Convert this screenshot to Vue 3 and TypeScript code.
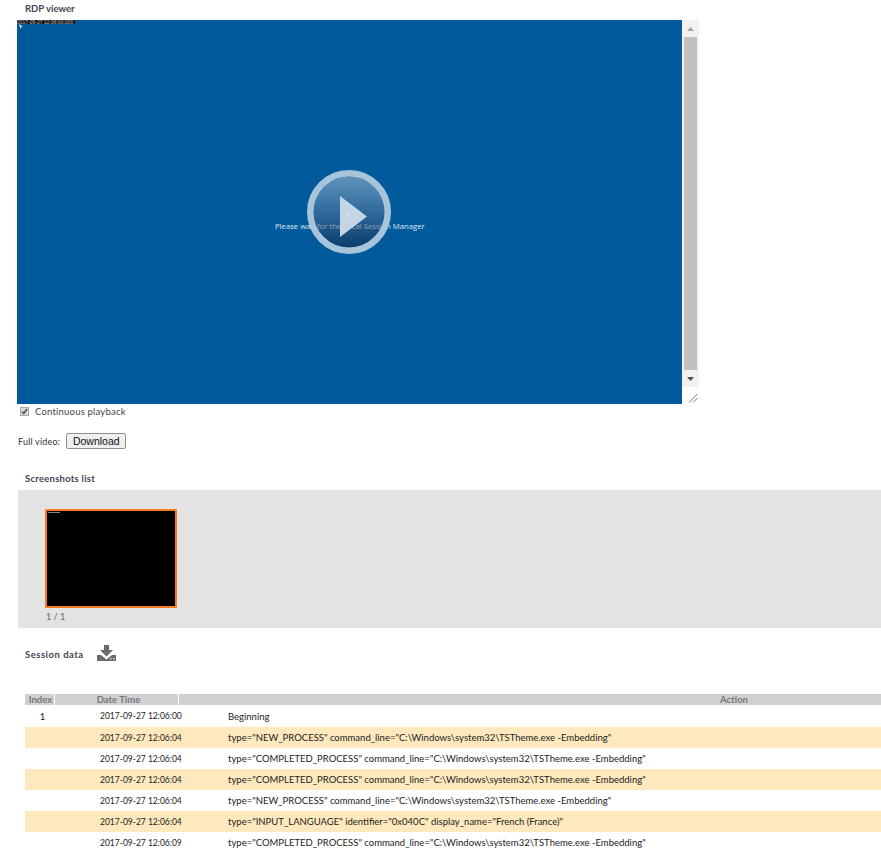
<script setup lang="ts">
interface Row { index: string; date: string; action: string }
const np = 'command_line="C:\\Windows\\system32\\TSTheme.exe -Embedding"'
const rows: Row[] = [
  { index: '1', date: '2017-09-27 12:06:00', action: 'Beginning' },
  { index: '', date: '2017-09-27 12:06:04', action: 'type="NEW_PROCESS" ' + np },
  { index: '', date: '2017-09-27 12:06:04', action: 'type="COMPLETED_PROCESS" ' + np },
  { index: '', date: '2017-09-27 12:06:04', action: 'type="COMPLETED_PROCESS" ' + np },
  { index: '', date: '2017-09-27 12:06:04', action: 'type="NEW_PROCESS" ' + np },
  { index: '', date: '2017-09-27 12:06:04', action: 'type="INPUT_LANGUAGE" identifier="0x040C" display_name="French (France)"' },
  { index: '', date: '2017-09-27 12:06:09', action: 'type="COMPLETED_PROCESS" ' + np },
]
</script>

<template>
  <div class="page">
    <h2 class="title first">RDP viewer</h2>
    <div class="viewer">
      <div class="screen">
        <div class="stamp">2017-09-27 12:06:00.000</div>
        <svg class="cursor" width="4" height="5" viewBox="0 0 4 5"><path d="M0 0 L4 3 H2 L1.500 5 Z" fill="#e8eef4" /></svg>
        <div class="wait">Please wait for the Local Session Manager</div>
        <div class="play">
          <svg width="84" height="84" viewBox="0 0 84 84">
            <defs>
              <linearGradient id="disc" x1="0" y1="0" x2="0" y2="1">
                <stop offset="0" stop-color="#bdccde" />
                <stop offset="0.5" stop-color="#5d7a9c" />
                <stop offset="1" stop-color="#171e38" />
              </linearGradient>
            </defs>
            <circle cx="42" cy="42" r="35.500" fill="url(#disc)" fill-opacity="0.5" />
            <circle cx="42" cy="42" r="38.750" fill="none" stroke="#b5cde0" stroke-width="6.500" stroke-opacity="0.92" />
            <path d="M33 26 L60 46.500 L33 67 Z" fill="#c4d6e5" />
            <circle cx="41" cy="44" r="0.800" fill="#fff" />
          </svg>
        </div>
      </div>
      <div class="scrollbar">
        <div class="arrow"><svg width="7" height="4" viewBox="0 0 7 4"><path d="M3.500 0 L7 4 H0 Z" fill="#a3a3a3" /></svg></div>
        <div class="thumb"></div>
        <div class="arrow"><svg width="7" height="4" viewBox="0 0 7 4"><path d="M0 0 H7 L3.500 4 Z" fill="#505050" /></svg></div>
        <div class="corner">
          <svg width="10" height="10" viewBox="0 0 10 10"><path d="M1 9.500 L9.500 1 M5 9.500 L9.500 5" stroke="#777" stroke-width="1" fill="none" /></svg>
        </div>
      </div>
    </div>
    <div class="continuous">
      <span class="check">
        <svg width="7" height="7" viewBox="0 0 7 7"><path d="M1 3.500 L2.800 5.500 L6 1" stroke="#555" stroke-width="1.600" fill="none" /></svg>
      </span>
      <span>Continuous playback</span>
    </div>
    <div class="full"><span>Full video:</span><button type="button">Download</button></div>

    <h2 class="title shots-title">Screenshots list</h2>
    <div class="shots">
      <div class="shot"><div class="shot-stamp"></div></div>
      <div class="count">1 / 1</div>
    </div>

    <div class="session">
      <h2 class="title session-title">Session data</h2>
      <svg class="dl" width="19" height="17" viewBox="0 0 19 17">
        <path d="M7 0 H12 V5 H16 L9.500 11.500 L3 5 H7 Z" fill="#6b6b6b" />
        <path d="M0 10 H4 L9.500 14.500 L15 10 H19 V16 H0 Z" fill="#6b6b6b" />
        <rect x="13" y="13" width="1.500" height="1.500" fill="#d8d8d8" />
        <rect x="16" y="13" width="1.500" height="1.500" fill="#d8d8d8" />
      </svg>
    </div>

    <div class="table">
      <div class="head">
        <div class="h-index">Index</div>
        <div class="h-date">Date Time</div>
        <div class="h-action">Action</div>
      </div>
      <div v-for="(r, i) in rows" :key="i" class="row" :class="{ odd: i % 2 === 1, top: i === 0 }">
        <div class="c-index">{{ r.index }}</div>
        <div class="c-date">{{ r.date }}</div>
        <div class="c-action">{{ r.action }}</div>
      </div>
    </div>
  </div>
</template>

<style scoped>
.page {
  width: 881px;
  height: 852px;
  overflow: hidden;
  font-family: "Lato", "DejaVu Sans", sans-serif;
  font-size: 9.500px;
  color: #333;
}
.title {
  margin: 0;
  font-size: 9.500px;
  line-height: 12px;
  font-weight: 700;
  color: #3f4650;
}
.first { padding: 3px 0 0 25px; height: 17px; box-sizing: border-box; }
.viewer {
  display: flex;
  width: 682px;
  height: 384px;
  margin-left: 17px;
  margin-top: 3px;
}
.screen {
  position: relative;
  flex: 1;
  background: #015a9c;
  overflow: hidden;
}
.stamp {
  position: absolute;
  left: 0;
  top: 0;
  width: 58px;
  height: 4px;
  overflow: hidden;
  background: #14141c;
  color: #b8b8b8;
  font-family: "Liberation Sans", sans-serif;
  font-size: 5px;
  line-height: 4px;
  white-space: nowrap;
}
.cursor {
  position: absolute;
  left: 2px;
  top: 4px;
}
.wait {
  position: absolute;
  left: 258px;
  top: 200px;
  font-family: "Open Sans", sans-serif;
  font-size: 7.700px;
  line-height: 12px;
  color: #dde8f2;
  white-space: nowrap;
}
.play {
  position: absolute;
  left: 290px;
  top: 150px;
  width: 84px;
  height: 84px;
}
.scrollbar {
  width: 17px;
  display: flex;
  flex-direction: column;
  background: #f1f1f1;
}
.arrow {
  height: 17px;
  display: flex;
  align-items: center;
  justify-content: center;
}
.thumb {
  flex: 1;
  margin: 0 2px;
  background: #c1c1c1;
}
.corner {
  height: 17px;
  background: #fff;
  display: flex;
  align-items: flex-end;
  justify-content: flex-end;
  padding: 0 1px 1px 0;
  box-sizing: border-box;
}
.continuous {
  display: flex;
  align-items: center;
  height: 15px;
  padding-left: 20px;
  font-size: 9.500px;
  letter-spacing: 0.2px;
  color: #444;
}
.check {
  display: flex;
  align-items: center;
  justify-content: center;
  width: 9px;
  height: 9px;
  margin-right: 6px;
  box-sizing: border-box;
  background: #dcdcdc;
  border: 1px solid #a8a8a8;
}
.full {
  display: flex;
  align-items: center;
  gap: 6px;
  margin-top: 14px;
  padding-left: 18px;
  font-size: 9px;
  letter-spacing: 0.2px;
}
.full button {
  width: 60px;
  height: 16px;
  padding: 0;
  font-family: "Liberation Sans", sans-serif;
  font-size: 10.500px;
  letter-spacing: 0;
  line-height: 14px;
  color: #111;
  background: #efefef;
  border: 1px solid #8f8f8f;
  border-radius: 2px;
}
.shots-title { margin: 24px 0 0 25px; letter-spacing: 0.25px; }
.shots {
  margin: 5px 0 0 18px;
  height: 138px;
  background: #e3e3e3;
  padding: 19px 0 0 27px;
  box-sizing: border-box;
}
.shot {
  position: relative;
  width: 132px;
  height: 99px;
  background: #000;
  border: 2px solid #f47a24;
  border-radius: 1px;
  box-sizing: border-box;
}
.shot-stamp {
  position: absolute;
  left: 1px;
  top: 1px;
  width: 12px;
  height: 1px;
  background: #888;
}
.count { margin: 3px 0 0 1px; font-size: 9px; line-height: 12px; color: #5b6470; }
.session {
  display: flex;
  align-items: center;
  gap: 13px;
  height: 18px;
  margin: 18px 0 0 25px;
}
.session-title { letter-spacing: 0.5px; }
.dl { display: block; margin-top: -3px; }
.table { margin: 30px 0 0 25px; width: 1264px; }
.head {
  display: flex;
  height: 11px;
  line-height: 11px;
  background: #d0d0d0;
  font-size: 9.500px;
  font-weight: 700;
  color: #777;
  text-align: center;
}
.h-index { width: 30px; border-right: 1px solid #fff; box-sizing: border-box; padding-left: 2px; }
.h-date { width: 124px; border-right: 1px solid #fff; box-sizing: border-box; padding-left: 4px; }
.h-action { flex: 1; }
.row {
  display: flex;
  align-items: center;
  height: 21px;
  color: #222;
}
.row.top { height: 22px; }
.odd { background: #fde9bd; }
.c-index { width: 35px; text-align: center; }
.c-date { width: 168px; padding-left: 40px; font-size: 8.500px; box-sizing: border-box; }
.c-action { flex: 1; white-space: nowrap; }
</style>
